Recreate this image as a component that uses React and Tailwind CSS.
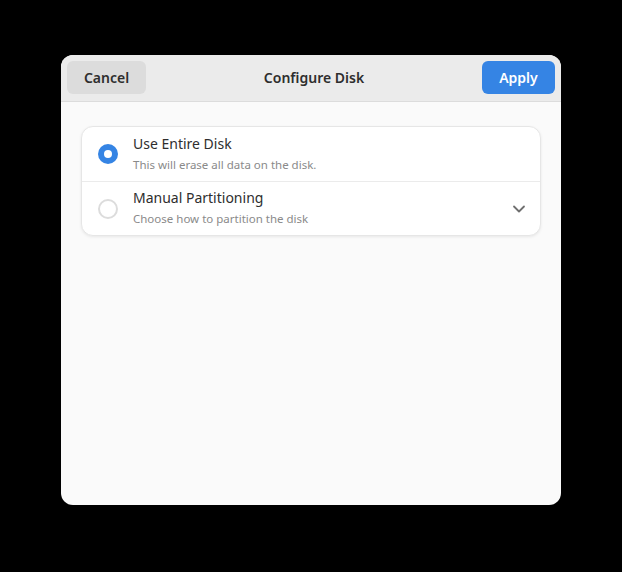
import React, { useState } from 'react'

const OPTIONS = [
  { id: 'entire', title: 'Use Entire Disk', sub: 'This will erase all data on the disk.' },
  { id: 'manual', title: 'Manual Partitioning', sub: 'Choose how to partition the disk', expand: true },
]

function Radio({ checked }) {
  if (checked) {
    return (
      <div className="w-[20px] h-[20px] rounded-full bg-[#3584e4] flex items-center justify-center shrink-0">
        <div className="w-[8px] h-[8px] rounded-full bg-white" />
      </div>
    )
  }
  return <div className="w-[20px] h-[20px] rounded-full border-2 border-[#dcdcdc] bg-white shrink-0" />
}

export default function App() {
  const [choice, setChoice] = useState('entire')

  return (
    <div className="w-[622px] h-[572px] bg-black flex items-start justify-center pt-[55px] font-['Noto_Sans',sans-serif]">
      <div className="w-[500px] h-[450px] rounded-[12px] overflow-hidden bg-[#fafafa] flex flex-col">

        {/* Header bar */}
        <div className="h-[47px] bg-[#ebebeb] border-b border-[#dcdcdc] flex items-center justify-between px-[6px] pb-[2px]">
          <button className="w-[79px] h-[33px] rounded-[6px] bg-[#dcdcdc] text-[14px] font-semibold text-[#2e2e2e]">
            Cancel
          </button>
          <div className="text-[14px] font-semibold text-[#2e2e2e]">Configure Disk</div>
          <button className="w-[73px] h-[33px] rounded-[6px] bg-[#3584e4] text-[14px] font-semibold text-white">
            Apply
          </button>
        </div>

        {/* Content */}
        <div className="px-[20px] pt-[24px]">
          <div className="bg-white rounded-[12px] border border-[#e6e6e6] shadow-[0_1px_3px_rgba(0,0,0,0.08)] overflow-hidden">
            {OPTIONS.map((o, i) => (
              <div
                key={o.id}
                onClick={() => setChoice(o.id)}
                className={`h-[54px] flex items-center pl-[16px] pr-[13px] ${i > 0 ? 'border-t border-[#ebebeb]' : ''}`}
              >
                <Radio checked={choice === o.id} />
                <div className="ml-[15px] flex-1 flex flex-col leading-none pb-[2px]">
                  <span className="text-[14px] text-[#2e2e2e] leading-[18px]">{o.title}</span>
                  <span className="text-[11.5px] text-[#8a8a8a] leading-[15px] mt-[4px]">{o.sub}</span>
                </div>
                {o.expand && (
                  <svg width="16" height="16" viewBox="0 0 16 16" className="text-[#6f6f6f]">
                    <path d="M3 5.5l5 5 5-5" fill="none" stroke="currentColor" strokeWidth="1.8" strokeLinecap="round" strokeLinejoin="round" />
                  </svg>
                )}
              </div>
            ))}
          </div>
        </div>
      </div>
    </div>
  )
}
